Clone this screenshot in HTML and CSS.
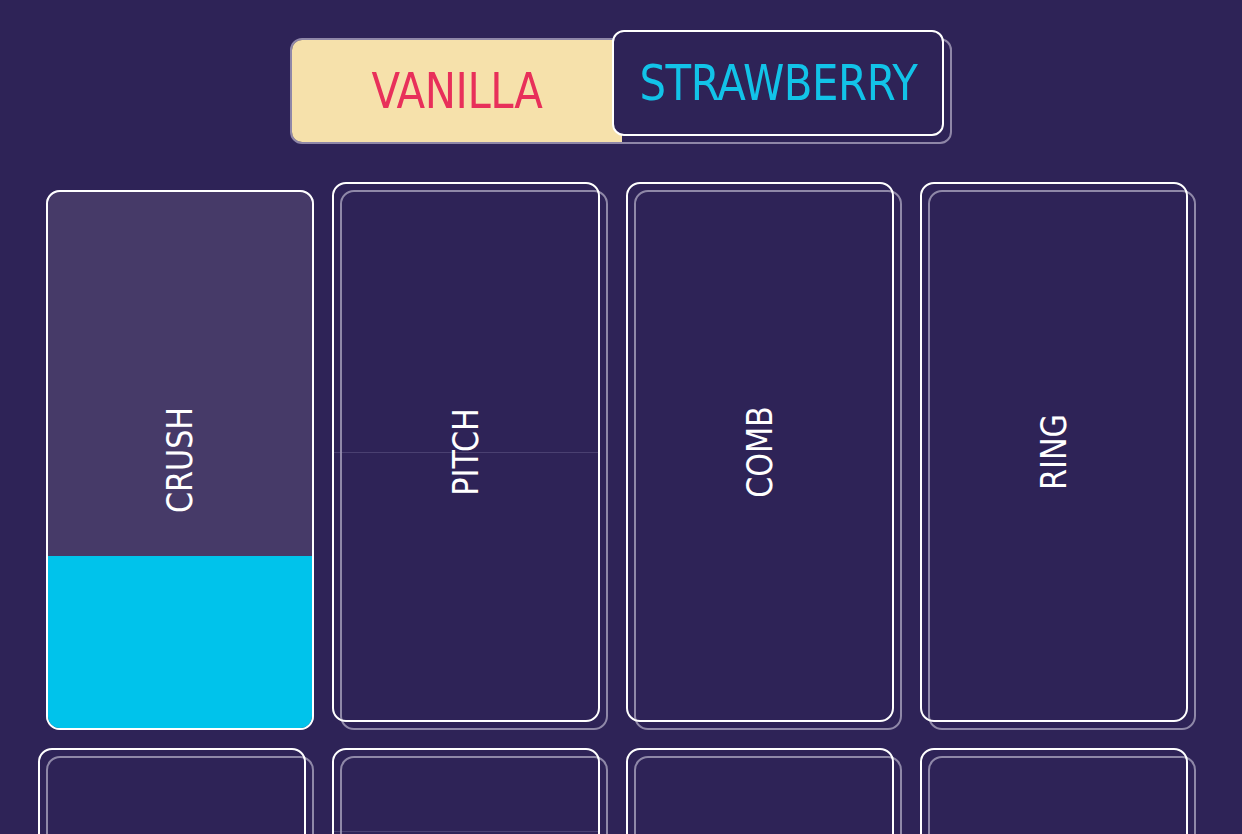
FILE: index.html
```html
<!DOCTYPE html>
<html>
<head>
  <meta charset="UTF-8">
  <title>Flavours</title>
  <link rel="stylesheet" href="styles.css">
</head>
<body>
  <div class="toggle">
    <div class="seg seg-on"><span class="seg-label red">VANILLA</span></div>
    <div class="seg seg-off">
      <div class="seg-face"><span class="seg-label blue">STRAWBERRY</span></div>
    </div>
  </div>

  <div class="pads">
    <div class="pad pressed">
      <div class="face">
        <div class="level" style="height: 32%"></div>
        <span class="pad-label">CRUSH</span>
      </div>
    </div>
    <div class="pad">
      <div class="face"><div class="hair"></div><span class="pad-label">PITCH</span></div>
    </div>
    <div class="pad">
      <div class="face"><span class="pad-label">COMB</span></div>
    </div>
    <div class="pad">
      <div class="face"><span class="pad-label">RING</span></div>
    </div>
    <div class="pad"><div class="face"></div></div>
    <div class="pad"><div class="face"><div class="hair hair-top"></div></div></div>
    <div class="pad"><div class="face"></div></div>
    <div class="pad"><div class="face"></div></div>
  </div>
</body>
</html>
```

FILE: styles.css
```css
html, body { margin: 0; padding: 0; }
body {
  background: #2e2357;
  height: 834px;
  overflow: hidden;
  font-family: "Liberation Sans Narrow", "DejaVu Sans Condensed", "Liberation Sans", sans-serif;
}

.toggle {
  position: relative;
  box-sizing: border-box;
  width: 662px;
  height: 106px;
  margin: 38px auto 0;
  border: 2px solid #8f87a8;
  border-radius: 12px;
  display: flex;
}
.seg { display: flex; align-items: center; justify-content: center; }
.seg-on {
  width: 330px;
  background: #f6e1ab;
  border-radius: 10px 0 0 10px;
}
.seg-off { flex: 1; }
.seg-face {
  position: absolute;
  left: 320px;
  top: -10px;
  box-sizing: border-box;
  width: 332px;
  height: 106px;
  border: 2px solid #ffffff;
  border-radius: 12px;
  background: #2e2357;
  display: flex;
  align-items: center;
  justify-content: center;
}
.seg-label {
  font-size: 50px;
  letter-spacing: -0.5px;
  display: inline-block;
  transform: scaleX(0.93);
}
.red { color: #e8305a; }
.blue { color: #12c3e8; }

.pads {
  display: grid;
  grid-template-columns: repeat(4, 268px);
  grid-auto-rows: 540px;
  gap: 26px;
  padding: 38px 0 0 38px;
}
.pad { position: relative; }
.pad::before {
  content: "";
  position: absolute;
  left: 8px;
  top: 8px;
  width: 100%;
  height: 100%;
  box-sizing: border-box;
  border: 2px solid #8f88a8;
  border-radius: 14px;
}
.face {
  position: relative;
  box-sizing: border-box;
  height: 100%;
  border: 2px solid #ffffff;
  border-radius: 14px;
  overflow: hidden;
  display: flex;
  align-items: center;
  justify-content: center;
}
.pressed .face {
  transform: translate(8px, 8px);
  background: #463a68;
}
.level {
  position: absolute;
  left: 0;
  right: 0;
  bottom: 0;
  background: #00c3eb;
}
.hair {
  position: absolute;
  left: 0;
  right: 0;
  top: 50%;
  height: 1px;
  background: rgba(160, 150, 190, 0.25);
}
.hair-top { top: 81px; }
.pad-label {
  position: relative;
  color: #ffffff;
  font-size: 35px;
  transform: rotate(-90deg) scaleX(0.96);
  white-space: nowrap;
}
```
